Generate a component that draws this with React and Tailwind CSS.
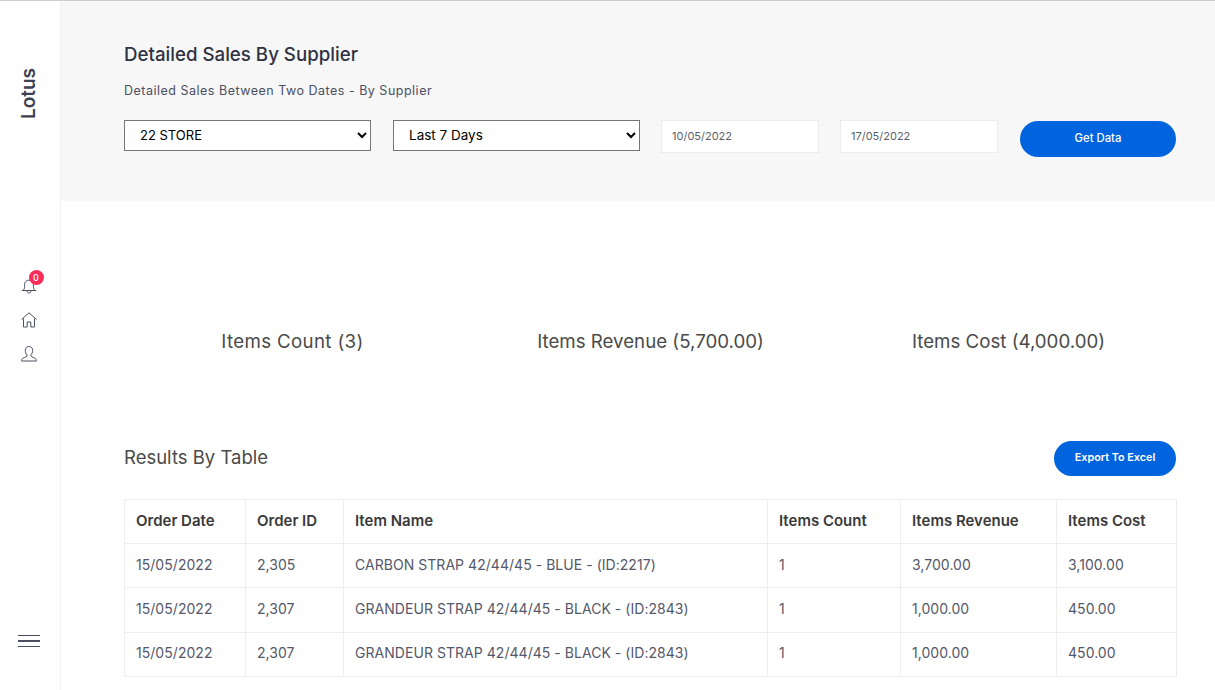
import React from "react";

const font = "font-['Inter','Noto_Sans',sans-serif]";

const rows = [
  ["15/05/2022", "2,305", "CARBON STRAP 42/44/45 - BLUE - (ID:2217)", "1", "3,700.00", "3,100.00"],
  ["15/05/2022", "2,307", "GRANDEUR STRAP 42/44/45 - BLACK - (ID:2843)", "1", "1,000.00", "450.00"],
  ["15/05/2022", "2,307", "GRANDEUR STRAP 42/44/45 - BLACK - (ID:2843)", "1", "1,000.00", "450.00"],
];

const heads = ["Order Date", "Order ID", "Item Name", "Items Count", "Items Revenue", "Items Cost"];
const widths = ["w-[121px]", "w-[98px]", "w-[424px]", "w-[133px]", "w-[156px]", "w-[120px]"];

const Sidebar = () => (
  <aside className="w-[61px] h-[689px] shrink-0 bg-white border-r border-[#f2f2f2] flex flex-col items-center">
    <div className="h-[199px] w-full flex justify-center pt-[67px] pr-[2px]">
      <span className="text-[#3d4152] text-[19px] font-semibold h-fit [writing-mode:vertical-rl] rotate-180">Lotus</span>
    </div>
    <div className="flex flex-col items-center gap-[16px] mt-[77px] pr-[3px] text-[#4a4f63]">
      <div className="relative h-[18px]">
        <svg width="18" height="18" viewBox="0 0 18 18" fill="none" stroke="currentColor" strokeWidth="1">
          <path d="M3 13.5c1-1 1.6-2 1.6-4V7.5a4.4 4.4 0 0 1 8.8 0v2c0 2 .6 3 1.6 4z" />
          <path d="M1.8 13.5h14.4M7 14c0 2.6 4 2.6 4 0" />
        </svg>
        <span className="absolute -top-[7px] left-[9px] w-[15px] h-[15px] rounded-full bg-[#fb2c5a] text-white text-[9px] font-medium flex items-center justify-center">0</span>
      </div>
      <svg width="18" height="18" viewBox="0 0 18 18" fill="none" stroke="currentColor" strokeWidth="1">
        <path d="M1.5 8.5 9 1.8l7.5 6.7" />
        <path d="M3.5 7.500v8.500h3.700v-5h3.600v5h3.700V7.500" />
      </svg>
      <svg width="18" height="18" viewBox="0 0 18 18" fill="none" stroke="currentColor" strokeWidth="1">
        <path d="M9 1.500c-2.300 0-3.700 1.700-3.700 4 0 1.800.8 3.300 1.700 4.200v1.500c0 .8-4.700 1.500-5.300 3.300-.2.600-.2 1.200-.2 1.500h15c0-.3 0-.9-.2-1.500-.6-1.800-5.300-2.500-5.300-3.300V9.700c.9-.9 1.700-2.400 1.700-4.200 0-2.300-1.400-4-3.700-4z" />
      </svg>
    </div>
    <div className="mt-auto mb-[43px] pr-[3px] flex flex-col gap-[4px]">
      <div className="w-[22px] h-[1.5px] bg-[#4a4f63]" />
      <div className="w-[22px] h-[1.5px] bg-[#4a4f63]" />
      <div className="w-[22px] h-[1.5px] bg-[#4a4f63]" />
    </div>
  </aside>
);

const Filters = () => (
  <section className="h-[200px] bg-[#f7f7f7] pl-[63px] pr-[39px] pt-[41px]">
    <h1 className="text-[#2f3242] text-[18.7px] leading-[26px] font-medium">Detailed Sales By Supplier</h1>
    <p className="mt-[14px] text-[#4a4f63] text-[12.5px] leading-[18px] tracking-[0.5px]">Detailed Sales Between Two Dates - By Supplier</p>
    <div className="mt-[20px] flex items-start">
      <select defaultValue="22 STORE" className="w-[247px] h-[31px] bg-white border border-[#767676] pl-[11px] pb-[1px] text-[13px] text-black">
        <option>22 STORE</option>
      </select>
      <select defaultValue="Last 7 Days" className="ml-[22px] w-[247px] h-[31px] bg-white border border-[#767676] pl-[11px] pb-[1px] text-[13.5px] text-black">
        <option>Last 7 Days</option>
      </select>
      <input readOnly value="10/05/2022" className="ml-[21px] w-[158px] h-[33px] bg-white border border-[#ececec] pl-[10px] pb-[2px] text-[11px] text-[#5c5f6b] outline-none" />
      <input readOnly value="17/05/2022" className="ml-[21px] w-[158px] h-[33px] bg-white border border-[#ececec] pl-[10px] pb-[2px] text-[11px] text-[#5c5f6b] outline-none" />
      <button className="ml-[22px] mt-[1px] w-[156px] h-[36px] pb-[1px] rounded-full bg-[#0064de] text-white text-[11.3px] font-medium">Get Data</button>
    </div>
  </section>
);

const Stats = () => (
  <section className="h-[240px] pl-[63px] pr-[38px] pt-[128px] text-[#4a4a4a] text-[18.7px] leading-[26px] grid grid-cols-3 text-center">
    <p className="mr-[14px] tracking-[0.35px]">Items Count (3)</p>
    <p>Items Revenue (5,700.00)</p>
    <p className="ml-[14px]">Items Cost (4,000.00)</p>
  </section>
);

const ResultsTable = () => (
  <section className="pl-[63px] pr-[38px]">
    <div className="flex items-center justify-between h-[35px] pr-[1px]">
      <h2 className="text-[#4a4a4a] text-[18.5px] pb-[2px]">Results By Table</h2>
      <button className="w-[122px] h-[35px] pb-[1px] rounded-full bg-[#0064de] text-white text-[10.8px] font-semibold">Export To Excel</button>
    </div>
    <table className="mt-[23px] w-[1052px] table-fixed border-collapse text-[14px]">
      <colgroup>
        {widths.map((w, i) => <col key={i} className={w} />)}
      </colgroup>
      <thead>
        <tr className="h-[44px]">
          {heads.map((h) => (
            <th key={h} className="border border-[#eeeeee] px-[11px] text-left text-[15px] font-semibold text-[#3a3a3a]">{h}</th>
          ))}
        </tr>
      </thead>
      <tbody>
        {rows.map((row, i) => (
          <tr key={i} className={i === 1 ? "h-[45px]" : "h-[44px]"}>
            {row.map((c, j) => (
              <td key={j} className={`border border-[#eeeeee] px-[11px] tracking-[0.04px] text-[#55586a] whitespace-nowrap ${i === 0 ? "pb-[2px]" : "pb-[4px]"}`}>{c}</td>
            ))}
          </tr>
        ))}
      </tbody>
    </table>
  </section>
);

export default function App() {
  return (
    <div className={`h-[690px] w-[1215px] overflow-hidden bg-white border-t border-[#cccccc] flex ${font}`}>
      <Sidebar />
      <main className="flex-1 min-w-0">
        <Filters />
        <Stats />
        <ResultsTable />
      </main>
    </div>
  );
}
